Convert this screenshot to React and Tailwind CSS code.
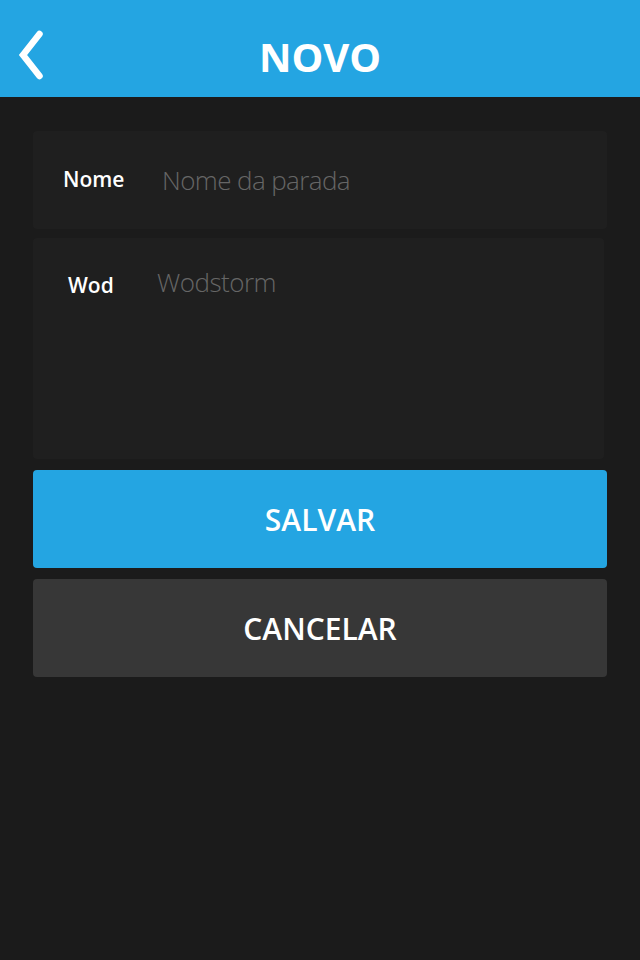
export default function App() {
  return (
    <div className="min-h-[960px] w-[640px] bg-[#1b1b1b]" style={{ fontFamily: '"Open Sans", sans-serif' }}>
      <header className="relative flex h-[97px] items-center justify-center bg-[#24a5e2] pt-[16px]">
        <button className="absolute left-0 top-0 h-[97px] w-[60px]">
          <svg width="60" height="97" viewBox="0 0 60 97" fill="none">
            <polyline points="39.5,34 23,55 39.5,76" stroke="white" strokeWidth="6.5" strokeLinecap="round" strokeLinejoin="miter" />
          </svg>
        </button>
        <h1 className="text-[40px] font-bold leading-none text-white">NOVO</h1>
      </header>
      <main className="flex flex-col px-[33px] pt-[34px]">
        <div className="flex h-[98px] w-[574px] items-center rounded-[4px] bg-[#1f1f1f]">
          <span className="w-[129px] pl-[30px] text-[21px] font-semibold text-white">Nome</span>
          <span className="text-[26px] font-light tracking-[-0.6px] text-[#666666]">Nome da parada</span>
        </div>
        <div className="mt-[9px] flex h-[221px] w-[571px] items-start rounded-[4px] bg-[#1f1f1f] pt-[25px]">
          <span className="mt-[7px] w-[124px] pl-[35px] text-[21px] font-semibold text-white">Wod</span>
          <span className="text-[26px] font-light tracking-[-0.5px] text-[#666666]">Wodstorm</span>
        </div>
        <button className="mt-[11px] flex h-[98px] w-[574px] items-center justify-center rounded-[4px] bg-[#24a5e2] text-[30px] font-semibold text-white">
          SALVAR
        </button>
        <button className="mt-[11px] flex h-[98px] w-[574px] items-center justify-center rounded-[4px] bg-[#373737] text-[30px] font-semibold text-white">
          CANCELAR
        </button>
      </main>
    </div>
  );
}
